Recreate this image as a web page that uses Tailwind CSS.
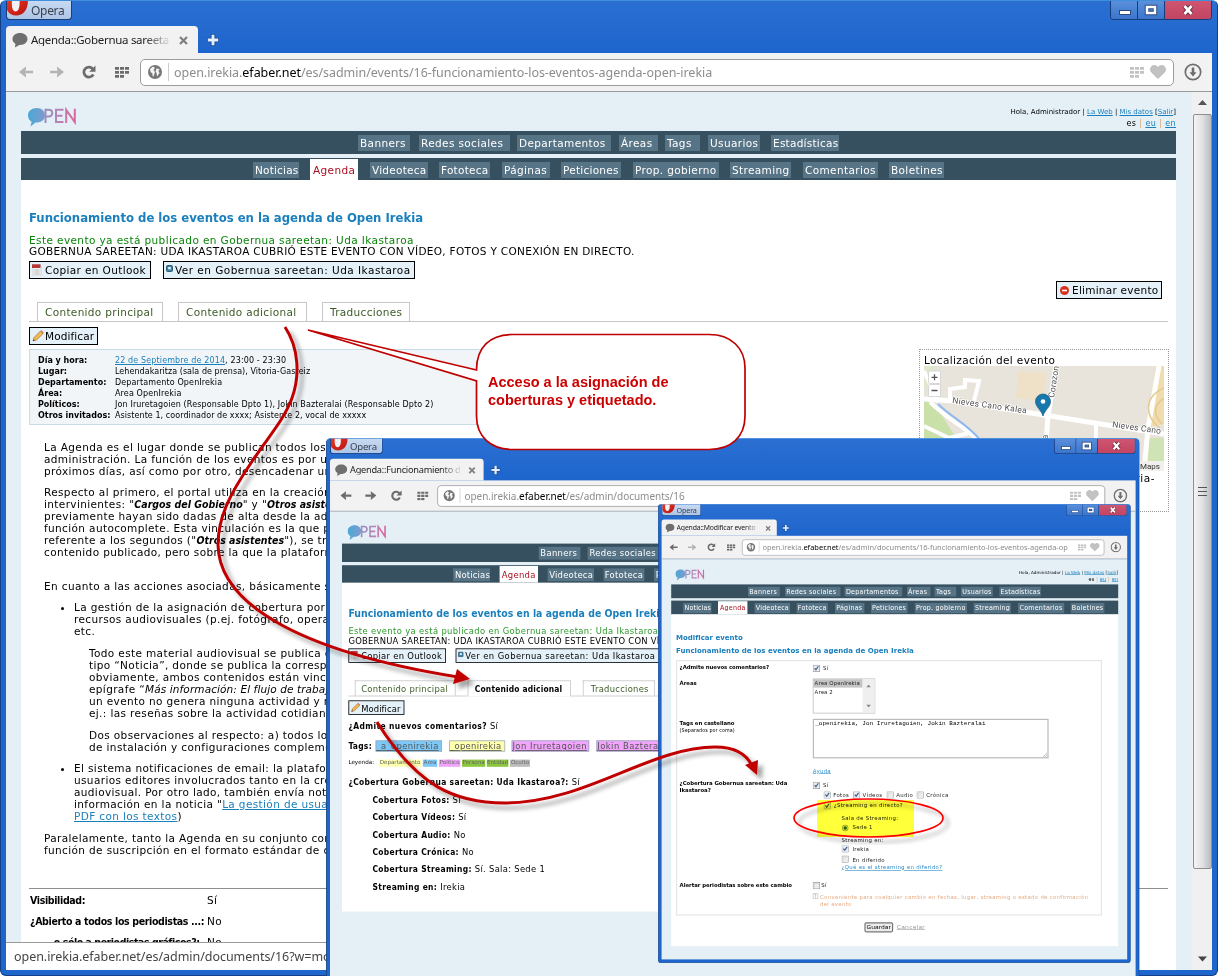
<!DOCTYPE html>
<html lang="es">
<head>
<meta charset="utf-8">
<title>Agenda::Gobernua sareetan</title>
<script src="https://cdn.jsdelivr.net/npm/@tailwindcss/browser@4"></script>
</head>
<body class="relative w-[1218px] h-[976px] overflow-hidden bg-white text-black font-['DejaVu_Sans',Verdana,sans-serif] text-[10.5px] leading-[12px] tracking-[0.37px] whitespace-nowrap">

<!-- Shared icons -->
<svg class="absolute w-0 h-0">
  <defs>
    <linearGradient id="openGrad" gradientUnits="userSpaceOnUse" x1="12" x2="50" y1="0" y2="0"><stop offset="0" stop-color="#8a93c4"/><stop offset=".5" stop-color="#b784b8"/><stop offset="1" stop-color="#e0609a"/></linearGradient>
    <linearGradient id="bubbleGrad" x1="0" x2="1" y1="0" y2="0"><stop offset="0" stop-color="#4aa8d8"/><stop offset="1" stop-color="#7f9bcb"/></linearGradient>
    <linearGradient id="operaRed" x1="0" x2="1" y1="0" y2="1"><stop offset="0" stop-color="#e8391f"/><stop offset="1" stop-color="#b81212"/></linearGradient>
  </defs>
  <symbol id="i-bubble" viewBox="0 0 16 16"><path d="M8 1C3.700 1 .5 3.600.5 7c0 2 1 3.600 2.900 4.700L3 15.500l4.300-2.600H8c4.300 0 7.500-2.500 7.500-5.900S12.300 1 8 1z" fill="#6f6f6f"/></symbol>
  <symbol id="i-back" viewBox="0 0 14 12"><path d="M7 .5v3L6 4.700H14v2.600H6l1 1.200v3L0 6z" fill="currentColor"/></symbol>
  <symbol id="i-reload" viewBox="0 0 14 14"><path d="M11.300 9.500a5 5 0 1 1-.3-5.200" fill="none" stroke="#6c6c6c" stroke-width="2.700"/><path d="M13.500.5v6.300H7.200z" fill="#6c6c6c"/></symbol>
  <symbol id="i-grid" viewBox="0 0 14 11"><g fill="currentColor"><path d="M0 0h4v2.800H0zM5 0h4v2.800H5zM10 0h4v2.800h-4zM0 4h4v2.800H0zM5 4h4v2.800H5zM10 4h4v2.800h-4zM0 8h4v2.800H0zM5 8h4v2.800H5z"/></g></symbol>
  <symbol id="i-globe" viewBox="0 0 16 16"><circle cx="8" cy="8" r="7" fill="#777"/><path d="M3 5l3-2.500L8 4 6.500 6 8 8l-1.500 4.500-1-.5V9.500L3.500 8zM9.500 4.500l3 .5-1 2 1 2-2.500 3.500-.5-3.500L8.500 7.500z" fill="#f4f4f4"/></symbol>
  <symbol id="i-heart" viewBox="0 0 16 14"><path d="M8 13.500L1.500 7.200C-.5 4.500.8.6 4.300.5 6 .5 7.300 1.300 8 2.700 8.700 1.300 10 .5 11.700.5c3.500.1 4.800 4 2.800 6.700z" fill="#c2c2c2" stroke="#b0b0b0" stroke-width=".7"/></symbol>
  <symbol id="i-down" viewBox="0 0 18 18"><circle cx="9" cy="9" r="7.700" fill="none" stroke="#6e6e6e" stroke-width="1.700"/><path d="M7.700 4.500h2.600v4.700h2.200L9 13.500 5.500 9.200h2.200z" fill="#6e6e6e"/></symbol>
  <symbol id="i-opera" viewBox="0 0 22 16"><path d="M0 0h21c0 9-4 15-11 15.500C6 15.800 2 14 0 10z" fill="url(#operaRed)"/><path d="M5 0h7.500c.5 6-.5 11.500-4 11.500S4.500 6 5 0z" fill="#f4f2f6"/></symbol>
  <symbol id="i-logo" viewBox="0 0 50 20"><path d="M9 1C3.800 1 0 4 0 8.300c0 3 1.300 5.200 3.600 6.400L2.500 19.500l5-4H9c4.500 0 8-3 8-7.200S13.500 1 9 1z" fill="url(#bubbleGrad)"/><g fill="none" stroke="url(#openGrad)" stroke-width="2"><path d="M17.500 16V2.700h3c5 0 5 6.800 0 6.800h-3M35.500 2.700H28V15h7.500M28 8.700h6.500M38.200 16V2.800L46.800 15V1.700"/></g></symbol>
  <symbol id="i-pdf" viewBox="0 0 10 12"><path d="M1 0h6l2 2v10H1z" fill="#f2f2f2" stroke="#bbb" stroke-width=".5"/><path d="M0 .3h8.500V4H0z" fill="#b43a3a"/><path d="M2.500 6h5M2.500 8h5M2.500 10h5" stroke="#b9b9b9"/></symbol>
  <symbol id="i-ext" viewBox="0 0 7 7"><rect x=".5" y=".5" width="6" height="6" rx="1" fill="#3f7d9d" stroke="#2d5f7c"/><rect x="2.200" y="2" width="2.600" height="2.300" fill="#e8f4fa"/></symbol>
  <symbol id="i-pencil" viewBox="0 0 12 12"><path d="M1 11l1-3.500L8.500 1l2.700 2.500L4.500 10z" fill="#f3b650" stroke="#8c6a33" stroke-width=".6"/><path d="M8.500 1l1-.8 2.300 2.200-.8 1z" fill="#d9706a"/><path d="M1 11l.5-1.800L2.800 10.500z" fill="#333"/></symbol>
  <symbol id="i-check" viewBox="0 0 12 12"><rect x=".5" y=".5" width="11" height="11" fill="#e9ecef" stroke="#8c8f92"/><path d="M3 5.500l2.200 2.800L9.200 2.500" fill="none" stroke="#3c5a8c" stroke-width="1.900"/></symbol>
  <symbol id="i-box" viewBox="0 0 12 12"><rect x=".5" y=".5" width="11" height="11" fill="#ececec" stroke="#8c8f92"/><path d="M2.500 9.500v-7h7" fill="none" stroke="#cdcdcd"/></symbol>
</svg>

<!-- Window 1: main page -->
<section data-window data-tab="Agenda::Gobernua sareeta" data-url="/es/sadmin/events/16-funcionamiento-los-eventos-agenda-open-irekia" data-back="off" data-forward="off" class="absolute left-0 top-0 w-[1218px] h-[976px] flex flex-col rounded-[6px] overflow-hidden bg-[#1f66cc] border border-[#123f85] border-t-[#3f8fdc] px-[5px] pb-[5px]">
  <div class="flex grow min-h-0 bg-[#e4f0f6]">
    <div class="w-[1186px] pl-[15px] pr-[16px] overflow-hidden">
      <div class="flex justify-between h-[39px] pl-[7px]">
        <svg class="w-[50px] h-[20px] mt-[15px]"><use href="#i-logo"/></svg>
        <div class="text-right text-[7px] leading-[11px] tracking-normal mt-[15px]" data-hello></div>
      </div>
      <div data-nav="1" class="flex items-center h-[23px] mb-[4px] pl-[337px] bg-[#375060] text-white"></div>
      <div data-nav="2" class="flex items-center h-[22px] pl-[232px] bg-[#375060] text-white"></div>
      <div class="h-[790px] bg-white pl-[8px] pt-[29px]">
        <h1 class="h-[18px] leading-[18px] text-[13px] font-bold text-[#1a7fbd] font-['DejaVu_Sans_Condensed'] tracking-[-0.02px]">Funcionamiento de los eventos en la agenda de Open Irekia</h1>
        <p class="mt-[7px] text-[#0a860a] tracking-[0.4px]">Este evento ya está publicado en Gobernua sareetan: Uda Ikastaroa</p>
        <p class="h-[15px] leading-[11px] tracking-[0.31px]">GOBERNUA SAREETAN: UDA IKASTAROA CUBRIÓ ESTE EVENTO CON VÍDEO, FOTOS Y CONEXIÓN EN DIRECTO.</p>
        <div class="flex gap-[12px] h-[18px]">
          <span class="flex items-center w-[122px] border border-black bg-[#e5f1f8] pl-[2px] gap-[3px]"><svg class="w-[10px] h-[12px]"><use href="#i-pdf"/></svg>Copiar en Outlook</span>
          <span class="flex items-center w-[252px] border border-black bg-[#e5f1f8] pl-[2px] gap-[2px] tracking-[0.47px]"><svg class="w-[7px] h-[7px] mb-[3px]"><use href="#i-ext"/></svg>Ver en Gobernua sareetan: Uda Ikastaroa</span>
        </div>
        <div class="flex justify-end mt-[2px] pr-[14px] h-[18px]">
          <span class="flex items-center w-[106px] border border-black bg-[#e5f1f8] pl-[3px] gap-[3px] tracking-[0.25px]"><svg class="w-[9px] h-[9px]" viewBox="0 0 9 9"><circle cx="4.500" cy="4.500" r="4.500" fill="#d8301c"/><path d="M2 3.700h5v1.600H2z" fill="#fff"/></svg>Eliminar evento</span>
        </div>
        <div class="flex mt-[3px] mr-[8px] h-[20px] pl-[8px] border-b border-[#c6c6c6] text-[#3b5a26] leading-[19px] tracking-[0.33px]">
          <span class="w-[126px] mr-[15px] pl-[7px] border border-b-0 border-[#c6c6c6]">Contenido principal</span>
          <span class="w-[129px] mr-[15px] pl-[7px] border border-b-0 border-[#c6c6c6]">Contenido adicional</span>
          <span class="w-[88px] pl-[7px] border border-b-0 border-[#c6c6c6]">Traducciones</span>
        </div>
        <span class="flex items-center mt-[5px] w-[69px] h-[18px] border border-black bg-[#e5f1f8] pl-[2px] gap-px tracking-[0.1px]"><svg class="w-[12px] h-[12px]"><use href="#i-pencil"/></svg>Modificar</span>
        <div class="flex mt-[4px]">
          <div class="w-[890px]">
            <dl class="grid grid-cols-[77px_1fr] content-start w-[700px] h-[76px] pl-[8px] pt-[5px] border border-[#c9dde9] bg-[#f1f5f8] text-[8px] leading-[11px] tracking-[0.13px]">
              <dt class="font-bold tracking-normal">Día y hora:</dt><dd><a class="text-[#1a7fbd] underline">22 de Septiembre de 2014</a>, 23:00 - 23:30</dd>
              <dt class="font-bold tracking-normal">Lugar:</dt><dd class="tracking-[0.05px]">Lehendakaritza (sala de prensa), Vitoria-Gasteiz</dd>
              <dt class="font-bold tracking-normal">Departamento:</dt><dd>Departamento OpenIrekia</dd>
              <dt class="font-bold tracking-normal">Área:</dt><dd>Area OpenIrekia</dd>
              <dt class="font-bold tracking-normal">Políticos:</dt><dd>Jon Iruretagoien (Responsable Dpto 1), Jokin Bazteralai (Responsable Dpto 2)</dd>
              <dt class="font-bold tracking-normal">Otros invitados:</dt><dd class="tracking-[0.07px]">Asistente 1, coordinador de xxxx; Asistente 2, vocal de xxxxx</dd>
            </dl>
            <article class="pl-[15px] pt-[16px]">
              <p>La Agenda es el lugar donde se publican todos los<br>administración. La función de los eventos es por un<br>próximos días, así como por otro, desencadenar un</p>
              <p class="mt-[9px]">Respecto al primero, el portal utiliza en la creación<br>intervinientes: "<b class="italic font-['DejaVu_Sans_Condensed'] tracking-normal">Cargos del Gobierno</b>" y "<b class="italic font-['DejaVu_Sans_Condensed'] tracking-normal">Otros asiste</b><br>previamente hayan sido dadas de alta desde la adm<br>función autocomplete. Esta vinculación es la que pe<br>referente a los segundos ("<b class="italic font-['DejaVu_Sans_Condensed'] tracking-normal">Otros asistentes</b>"), se tr<br>contenido publicado, pero sobre la que la plataform</p>
              <p class="mt-[22px]">En cuanto a las acciones asociadas, básicamente se</p>
              <ul class="mt-[9px] pl-[30px] list-disc">
                <li>La gestión de la asignación de cobertura por p<br>recursos audiovisuales (p.ej. fotógrafo, operad<br>etc.
                  <p class="mt-[10px] pl-[15px]">Todo este material audiovisual se publica e<br>tipo “Noticia”, donde se publica la correspon<br>obviamente, ambos contenidos están vincul<br>epígrafe “<i class="tracking-[0.1px]">Más información: El flujo de trabajo</i><br>un evento no genera ninguna actividad y no<br>ej.: las reseñas sobre la actividad cotidiana</p>
                  <p class="mt-[10px] pl-[15px]">Dos observaciones al respecto: a) todos los<br>de instalación y configuraciones complemen</p>
                </li>
                <li class="mt-[9px]">El sistema notificaciones de email: la plataform<br>usuarios editores involucrados tanto en la crea<br>audiovisual. Por otro lado, también envía notif<br>información en la noticia "<a class="text-[#1a7fbd] underline">La gestión de usuari</a><br><a class="text-[#1a7fbd] underline">PDF con los textos</a>)</li>
              </ul>
              <p class="mt-[10px]">Paralelamente, tanto la Agenda en su conjunto com<br>función de suscripción en el formato estándar de ca</p>
            </article>
          </div>
          <aside class="w-[250px] h-[163px] p-[4px] border border-dotted border-[#999]">
            <h2 class="h-[12px] leading-[12px]">Localización del evento</h2>
            <svg class="w-[240px] h-[105px]" viewBox="0 0 240 105">
              <rect width="240" height="105" fill="#e8e4dc"/>
              <path d="M94 5l28 2-3 28-27-3z" fill="#efe0c8"/>
              <path d="M240 0h-8l-10 62 18-4z" fill="#f1dcae"/>
              <path d="M222 72h18v25h-22z" fill="#cfe3b4"/>
              <path d="M0 32l12 8 20 32H0zM28 105L0 75v30z" fill="#c9e0a8"/>
              <path d="M0 25L14 0H0z" fill="#dfe8cf"/>
              <g fill="none" stroke="#fff">
                <path d="M0 33L30 35 120 49 240 68" stroke-width="5"/>
                <path d="M132 0l-8 50-4 56" stroke-width="5"/>
                <path d="M235 0l-11 62-4 43" stroke-width="5"/>
                <path d="M172 58v20M0 5L14 36M6 36c20 20 45 30 58 50M0 60l25 12 20-5M26 35V23l15-2V14l14 1-5 20M0 96l28-20" stroke-width="4"/>
              </g>
              <path d="M14 38c14 14 30 20 42 36" fill="none" stroke="#8fb8f0" stroke-width="2"/>
              <path d="M240 22c-22 10-18 30-4 40M240 32c-12 8-10 18-2 26" fill="none" stroke="#e3c98f" stroke-width="1.500"/>
              <g font-family="Roboto" font-size="8.500" letter-spacing="0" fill="#555" stroke="#fff" stroke-width="1.500" paint-order="stroke">
                <text transform="translate(28 37) rotate(8)" textLength="75">Nieves Cano Kalea</text>
                <text transform="translate(188 61) rotate(8)" textLength="49">Nieves Cano</text>
                <text transform="translate(130 32) rotate(-81)" textLength="32">Corazon</text>
                <text transform="translate(123 78) rotate(-85)">ea</text>
              </g>
              <rect x="188" y="95" width="52" height="10" fill="#f2f0ec"/>
              <text x="216" y="102.500" font-family="Roboto" font-size="8" letter-spacing="0" fill="#333" textLength="20">Maps</text>
              <g fill="#fff" stroke="#ccc" stroke-width=".7"><rect x="4.500" y="5" width="12" height="12.500" rx="1"/><rect x="4.500" y="18.500" width="12" height="12" rx="1"/></g>
              <path d="M7.500 11.300h6M10.500 8.300v6M7.500 24.500h6" stroke="#555" stroke-width="1.300"/>
              <path d="M119 50c-1.500-6-7.500-9-7.500-14.500a7.500 7.500 0 0 1 15 0C126.500 41 120.500 44 119 50z" fill="#1878ac" stroke="#0e5c8a" stroke-width=".7"/><circle cx="119" cy="35.500" r="2.300" fill="#fff"/>
            </svg>
            <p class="text-right pr-[9px] pt-px tracking-[0.5px]">Lehendakaritza, Vitoria-</p>
          </aside>
        </div>
        <dl class="grid grid-cols-[177px_1fr] gap-y-[9px] mt-[32px] mr-[8px] pt-[5px] pl-[1px] border-t border-[#8f8f8f]">
          <dt class="font-bold font-['DejaVu_Sans_Condensed'] tracking-[-0.35px]">Visibilidad:</dt><dd>Sí</dd>
          <dt class="font-bold font-['DejaVu_Sans_Condensed'] tracking-[-0.35px]">¿Abierto a todos los periodistas ...:</dt><dd>No</dd>
          <dt class="pl-[12px] font-bold font-['DejaVu_Sans_Condensed'] tracking-[-0.45px]">… o sólo a periodistas gráficos?:</dt><dd>No</dd>
        </dl>
      </div>
    </div>
    <!-- Scrollbar -->
    <div class="flex flex-col items-center w-[20px] bg-[#f0f0f0]">
      <svg class="w-[9px] h-[22px]" viewBox="0 0 9 22"><path d="M0 13l4.500-5L9 13z" fill="#555"/></svg>
      <div class="flex flex-col items-center justify-center gap-[3px] w-[19px] h-[755px] rounded-[2px] border border-[#8e8e8e] bg-linear-to-r from-[#f4f4f4] via-[#e0e1e3] to-[#b9bbbf]">
        <i class="w-[9px] h-px bg-[#555]"></i><i class="w-[9px] h-px bg-[#555]"></i><i class="w-[9px] h-px bg-[#555]"></i>
      </div>
      <svg class="w-[9px] h-[6px] mt-auto mb-[8px]" viewBox="0 0 9 5"><path d="M0 0h9L4.500 5z" fill="#444"/></svg>
    </div>
  </div>
  <!-- Link status bubble -->
  <div class="absolute left-[5px] bottom-[5px] w-[420px] h-[28px] border-t border-[#999] bg-white pl-[8px] leading-[27px] text-[12.500px] tracking-[-0.04px] text-[#444] font-['Noto_Sans']">open.irekia.efaber.net/es/admin/documents/16?w=modulo</div>
</section>

<!-- Window 2: additional content -->
<section data-window data-tab="Agenda::Funcionamiento d" data-url="/es/admin/documents/16" data-back="on" data-forward="on" class="absolute left-[326px] top-[438px] w-[1017px] h-[690px] origin-top-left scale-[0.8] flex flex-col rounded-t-[6px] overflow-hidden bg-[#1f66cc] border border-[#123f85] border-t-[#3f8fdc] px-[4px]">
  <div class="grow min-h-0 bg-[#e4f0f6] pl-[15px] pr-[31px]">
    <div class="h-[40px] pl-[7px] pt-[16px]"><svg class="w-[50px] h-[20px]"><use href="#i-logo"/></svg></div>
    <div data-nav="1" class="[zoom:1.008] flex items-center h-[23px] mb-[4px] pl-[244px] bg-[#375060] text-white"></div>
    <div data-nav="2" class="[zoom:1.008] flex items-center h-[22px] pl-[138px] bg-[#375060] text-white"></div>
    <div class="h-[411px] bg-white pl-[8px] pt-[29px]">
      <h1 class="h-[18px] leading-[19px] text-[13px] font-bold text-[#1a7fbd] font-['DejaVu_Sans_Condensed'] tracking-[0.03px]">Funcionamiento de los eventos en la agenda de Open Irekia</h1>
      <p class="mt-[7px] text-[#2c9a2c] tracking-[0.44px]">Este evento ya está publicado en Gobernua sareetan: Uda Ikastaroa</p>
      <p class="h-[16px] leading-[12px] tracking-[0.3px]">GOBERNUA SAREETAN: UDA IKASTAROA CUBRIÓ ESTE EVENTO CON VÍDEO, FOTOS</p>
      <div class="flex gap-[12px] h-[18px]">
        <span class="flex items-center w-[122px] border border-black bg-[#e5f1f8] pl-[2px] gap-[3px]"><svg class="w-[10px] h-[12px]"><use href="#i-pdf"/></svg>Copiar en Outlook</span>
        <span class="flex items-center w-[256px] border border-black bg-[#e5f1f8] pl-[2px] gap-[2px] tracking-[0.52px]"><svg class="w-[7px] h-[7px] mb-[3px]"><use href="#i-ext"/></svg>Ver en Gobernua sareetan: Uda Ikastaroa</span>
      </div>
      <div class="flex mt-[22px] h-[20px] pl-[8px] border-b border-[#c6c6c6] text-[#3b5a26] leading-[21px] tracking-[0.33px]">
        <span class="w-[126px] mr-[15px] pl-[7px] border border-b-0 border-[#c6c6c6]">Contenido principal</span>
        <span class="w-[129px] h-[20px] mr-[15px] pl-[8px] border border-b-white border-[#c6c6c6] bg-white text-black font-bold font-['DejaVu_Sans_Condensed'] tracking-[0.2px]">Contenido adicional</span>
        <span class="w-[90px] pl-[9px] border border-b-0 border-[#c6c6c6]">Traducciones</span>
      </div>
      <span class="flex items-center mt-[5px] w-[70px] h-[18px] border border-black bg-[#e5f1f8] pl-[2px] pt-px gap-px tracking-[0.1px]"><svg class="w-[12px] h-[12px] -mt-px"><use href="#i-pencil"/></svg>Modificar</span>
      <p class="mt-[8px]"><b class="font-['DejaVu_Sans_Condensed'] tracking-[0.5px]">¿Admite nuevos comentarios?</b> Sí</p>
      <div class="flex items-center mt-[11px] h-[15px] text-[#555]">
        <b class="w-[34px] text-black font-['DejaVu_Sans_Condensed']">Tags:</b>
        <a class="w-[83px] mr-[9px] border border-[#9ab] bg-[#7cc8f8] underline tracking-[0.45px]">_a_openirekia</a>
        <a class="w-[70px] mr-[8px] border border-[#9ab] bg-[#ffffb0] underline">_openirekia</a>
        <a class="w-[97px] mr-[9px] border border-[#9ab] bg-[#f0a4fb] underline tracking-[0.6px]">Jon Iruretagoien</a>
        <a class="w-[101px] border border-[#9ab] bg-[#f0a4fb] underline tracking-[0.6px]">Jokin Bazteralai</a>
      </div>
      <div class="flex items-center gap-[2px] mt-[9px] h-[10px] text-[7px] leading-[9px] tracking-normal text-[#666] text-center">
        <span class="w-[36px] text-left text-black">Leyenda:</span>
        <span class="w-[53px] bg-[#ffffb0]">Departamento</span><span class="w-[18px] bg-[#7cc8f8]">Área</span><span class="w-[27px] bg-[#f0a4fb]">Político</span><span class="w-[29px] bg-[#8cc63f]">Persona</span><span class="w-[27px] bg-[#8cc63f]">Entidad</span><span class="w-[25px] bg-[#bbb]">Oculto</span>
      </div>
      <p class="mt-[13px] mb-[6px]"><b class="font-['DejaVu_Sans_Condensed'] tracking-[0.45px]">¿Cobertura Gobernua sareetan: Uda Ikastaroa?:</b> Sí</p>
      <ul class="pl-[30px] leading-[21.700px]">
        <li><b class="font-['DejaVu_Sans_Condensed'] tracking-[0.42px]">Cobertura Fotos:</b> Sí</li>
        <li><b class="font-['DejaVu_Sans_Condensed'] tracking-[0.42px]">Cobertura Vídeos:</b> Sí</li>
        <li><b class="font-['DejaVu_Sans_Condensed'] tracking-[0.42px]">Cobertura Audio:</b> No</li>
        <li><b class="font-['DejaVu_Sans_Condensed'] tracking-[0.42px]">Cobertura Crónica:</b> No</li>
        <li><b class="font-['DejaVu_Sans_Condensed'] tracking-[0.42px]">Cobertura Streaming:</b> Sí. Sala: Sede 1</li>
        <li><b class="font-['DejaVu_Sans_Condensed'] tracking-[0.42px]">Streaming en:</b> Irekia</li>
      </ul>
    </div>
  </div>
</section>

<!-- Window 3: edit form -->
<section data-window data-tab="Agenda::Modificar evento" data-url="/es/admin/documents/16-funcionamiento-los-eventos-agenda-op" data-back="on" data-forward="off" class="absolute left-[658px] top-[504px] w-[788px] h-[765px] origin-top-left scale-[0.6] flex flex-col rounded-[6px] overflow-hidden bg-[#1f66cc] border border-[#123f85] border-t-[#3f8fdc] px-[5px] pb-[5px]">
  <div class="grow min-h-0 bg-[#e4f0f6] pl-[16px] pr-[15px]">
    <div class="flex justify-between h-[42px] pl-[7px]">
      <svg class="w-[50px] h-[20px] mt-[16px]"><use href="#i-logo"/></svg>
      <div class="text-right text-[7px] leading-[11px] tracking-normal mt-[17px]" data-hello></div>
    </div>
    <div data-nav="1" class="[zoom:1.015] flex items-center h-[23px] mb-[4px] pl-[126px] bg-[#375060] text-white"></div>
    <div data-nav="2" class="[zoom:1.015] flex items-center h-[22px] pl-[20px] bg-[#375060] text-white"></div>
    <div class="h-[553px] bg-white pl-[8px] pt-[29px]">
      <h1 class="h-[21px] leading-[18px] text-[13px] font-bold text-[#1a7fbd] font-['DejaVu_Sans_Condensed'] tracking-normal">Modificar evento</h1>
      <h2 class="h-[26px] leading-[20px] text-[13px] font-bold text-[#1a7fbd] font-['DejaVu_Sans_Condensed'] tracking-[0.02px]">Funcionamiento de los eventos en la agenda de Open Irekia</h2>
      <form class="grid grid-cols-[222px_1fr] grid-rows-[27px_67px_100px_169px_48px] w-[710px] h-[426px] pl-[4px] pt-[5px] border-2 border-[#e6e6e6] text-[9px] leading-[11px] tracking-[0.5px] text-[#222]">
        <label class="font-bold text-black tracking-[-0.12px]">¿Admite nuevos comentarios?</label>
        <div class="flex items-end h-[13px] gap-[5px]"><svg class="w-[12px] h-[12px]"><use href="#i-check"/></svg>Sí</div>
        <label class="font-bold text-black tracking-[-0.12px]">Áreas</label>
        <div class="flex w-[104px] h-[58px] -mt-[3px] border border-[#aaa]">
          <div class="w-[82px] tracking-[0.2px]"><p class="h-[14px] pl-[2px] leading-[14px] bg-[#c4c4c4]">Area OpenIrekia</p><p class="pl-[2px] leading-[14px]">Area 2</p></div>
          <div class="flex flex-col items-center justify-between grow bg-[#efefef] py-[9px]"><svg class="w-[8px] h-[5px]" viewBox="0 0 8 5"><path d="M0 5l4-5 4 5z" fill="#888"/></svg><svg class="w-[8px] h-[5px]" viewBox="0 0 8 5"><path d="M0 0h8L4 5z" fill="#888"/></svg></div>
        </div>
        <label class="font-bold text-black tracking-[-0.12px]">Tags en castellano<br><small class="font-normal text-[8px] tracking-[0.15px]">(Separados por coma)</small></label>
        <div class="-mt-[3px]">
          <div class="relative w-[393px] h-[66px] border-2 border-[#bbb] pl-[2px] pt-[1px] font-['Liberation_Mono'] text-[10px] tracking-[0.04px] text-black">_openirekia, Jon Iruretagoien, Jokin Bazteralai
            <svg class="absolute right-0 bottom-0 w-[8px] h-[8px]" viewBox="0 0 8 8"><path d="M0 8l8-8M4 8l4-4" stroke="#888"/></svg>
          </div>
          <a class="block mt-[16px] text-[#2a8cc8] underline">Ayuda</a>
        </div>
        <label class="font-bold text-black tracking-[-0.12px]">¿Cobertura Gobernua sareetan: Uda<br>Ikastaroa?</label>
        <div class="pt-px">
          <div class="flex items-end gap-[5px] h-[13px]"><svg class="w-[12px] h-[12px]"><use href="#i-check"/></svg>Sí</div>
          <div class="flex items-end gap-[4px] h-[13px] mt-[4px] pl-[18px]"><svg class="w-[12px] h-[12px] mb-px"><use href="#i-check"/></svg><span class="w-[29px]">Fotos</span><svg class="w-[12px] h-[12px] mb-px"><use href="#i-check"/></svg><span class="w-[36px]">Vídeos</span><svg class="w-[12px] h-[12px] mb-px"><use href="#i-box"/></svg><span class="w-[30px]">Audio</span><svg class="w-[12px] h-[12px] mb-px"><use href="#i-box"/></svg>Crónica</div>
          <div class="flex items-center gap-[5px] h-[12px] mt-[5px] pl-[18px]"><svg class="w-[12px] h-[12px]"><use href="#i-check"/></svg>¿Streaming en directo?</div>
          <div class="pl-[48px]">
            <p class="mt-[9px]">Sala de Streaming:</p>
            <div class="flex items-center gap-[6px] mt-[5px]"><svg class="w-[12px] h-[12px]" viewBox="0 0 12 12"><circle cx="6" cy="6" r="5" fill="#e4e8e4" stroke="#777"/><circle cx="6" cy="6" r="2.800" fill="#23602a"/></svg>Sede 1</div>
            <p class="mt-[10px]">Streaming en:</p>
            <div class="flex items-end gap-[6px] h-[12px] mt-[3px]"><svg class="w-[12px] h-[12px] mb-px"><use href="#i-check"/></svg>Irekia</div>
            <div class="flex items-end gap-[6px] h-[12px] mt-[5px]"><svg class="w-[12px] h-[12px] mb-px"><use href="#i-box"/></svg>En diferido</div>
            <a class="block mt-[2px] text-[#2a8cc8] underline">¿Qué es el streaming en diferido?</a>
          </div>
        </div>
        <label class="font-bold text-black tracking-[-0.12px]">Alertar periodistas sobre este cambio</label>
        <div>
          <div class="flex gap-[2px]"><svg class="w-[12px] h-[12px]"><use href="#i-box"/></svg>Sí</div>
          <div class="flex gap-[3px] mt-[7px] leading-[12px] text-[#e6ac84]"><span class="w-[9px] h-[9px] border border-[#bbb] text-center text-[8px] leading-[8px] text-[#999]">?</span><p>Conveniente para cualquier cambio en fechas, lugar, streaming o estado de confirmación<br>del evento</p></div>
        </div>
      </form>
      <div class="flex items-center gap-[6px] mt-[11px] pl-[314px] text-[10px]"><span class="w-[48px] h-[17px] rounded-[3px] border-2 border-[#777] bg-[#ececec] text-center leading-[13px] tracking-normal">Guardar</span><a class="text-[#999] underline">Cancelar</a></div>
    </div>
  </div>
</section>

<!-- Annotations over the windows -->
<div class="absolute left-[817px] top-[800px] w-[97px] h-[37px] bg-[#ffff3a] mix-blend-multiply"></div>
<svg class="absolute left-0 top-0 w-[1218px] h-[976px]" viewBox="0 0 1218 976">
  <defs><filter id="sh" x="-20%" y="-20%" width="140%" height="140%"><feDropShadow dx="5" dy="5" stdDeviation="2" flood-color="#000" flood-opacity=".35"/></filter></defs>
  <path d="M476.500 370C476.500 347 490 334.500 513 334.500H709C731 334.500 745 348 745 368V416C745 437 731 449.500 709 449.500H513C491 449.500 476.500 437 476.500 416V381L308 330Z" fill="#fff" stroke="#c00000" stroke-width="1.700"/>
  <g filter="url(#sh)">
    <path d="M285 327C299 348 300 376 292 398C284 420 268 437 251 463C230 494 218 517 218 545C219 600 290 650 458 677" fill="none" stroke="#c00000" stroke-width="3"/>
    <path d="M470 679L453 684L457 669z" fill="#c00000"/>
  </g>
  <g filter="url(#sh)">
    <path d="M377 722C418 787 455 803 505 803C585 803 650 747 715 747C738 747 748 757 752 766" fill="none" stroke="#c00000" stroke-width="3"/>
    <path d="M757 775L745 765L758 760z" fill="#c00000"/>
  </g>
  <ellipse cx="868.500" cy="818" rx="74.500" ry="19" fill="none" stroke="#f00" stroke-width="1.700" filter="url(#sh)"/>
</svg>
<p class="absolute left-[488px] top-[373px] text-[14.500px] leading-[18px] tracking-normal font-bold text-[#cc0000] font-['Liberation_Sans',Arial,sans-serif]">Acceso a la asignación de<br>coberturas y etiquetado.</p>

<script>
// Builds the browser chrome shared by the three windows.
const chrome = (tab, url, back, fwd) => `
<header class="shrink-0 flex flex-col h-[52px] -mx-[5px] px-[5px] bg-linear-to-b from-[#2b6fd2] to-[#1d65cc] tracking-normal">
  <div class="flex justify-between h-[25px]">
    <div class="flex items-center w-[66px] h-[20px] -mt-px rounded-b-[4px] border border-t-0 border-[#1b3d78] bg-linear-to-b from-[#c9dbf3] to-[#aec5e6] text-[12px] text-[#3a3f4c] font-['Noto_Sans'] tracking-[-0.3px] pt-[2px] overflow-hidden"><svg class="w-[22px] h-[16px] -mt-[5px] mr-[2px]"><use href="#i-opera"/></svg>Opera</div>
    <div class="flex h-[19px] rounded-b-[4px] overflow-hidden border border-t-0 border-[#173c7d] bg-[#4a83d4]">
      <span class="w-[27px] border-r border-[#173c7d] bg-linear-to-b from-[#5a8fdb] to-[#3a76cc]"><svg class="w-[27px] h-[18px]" viewBox="0 0 27 18"><rect x="8.500" y="9.500" width="11" height="4" fill="#fff" stroke="#2b4a80"/></svg></span>
      <span class="w-[27px] border-r border-[#173c7d] bg-linear-to-b from-[#5a8fdb] to-[#3a76cc]"><svg class="w-[26px] h-[18px]" viewBox="0 0 26 18"><rect x="9" y="6" width="8" height="6" fill="none" stroke="#2b4a80" stroke-width="4.500"/><rect x="9" y="6" width="8" height="6" fill="none" stroke="#fff" stroke-width="2.500"/></svg></span>
      <span class="w-[46px] bg-linear-to-b from-[#cf5570] to-[#c24462]"><svg class="w-[48px] h-[18px]" viewBox="0 0 48 18"><path d="M19.500 5l7 8M26.500 5l-7 8" stroke="#5c2035" stroke-width="4.500"/><path d="M19.500 5l7 8M26.500 5l-7 8" stroke="#fff" stroke-width="2.800"/></svg></span>
    </div>
  </div>
  <div class="flex items-center h-[27px]">
    <div class="flex items-center w-[192px] h-[27px] pl-[6px] rounded-t-[4px] bg-[#f2f2f2] text-[11.500px] text-[#222] font-['Noto_Sans']">
      <svg class="w-[16px] h-[16px] mr-[3px]"><use href="#i-bubble"/></svg>
      <span class="w-[141px] pt-px overflow-hidden tracking-[-0.3px] [mask-image:linear-gradient(to_right,#000_80%,transparent)]">${tab}</span>
      <svg class="w-[9px] h-[9px] mt-px ml-[7px]" viewBox="0 0 9 9"><path d="M1 1l7 7M8 1L1 8" stroke="#808080" stroke-width="2.300"/></svg>
    </div>
    <svg class="w-[12px] h-[12px] ml-[9px] mt-px" viewBox="0 0 12 12"><path d="M6 0v12M0 6h12" stroke="#1b4c9c" stroke-width="4.600"/><path d="M6 .8v10.400M.8 6h10.400" stroke="#e6effa" stroke-width="2.800"/></svg>
  </div>
</header>
<div class="shrink-0 flex items-center h-[39px] pl-[13px] pr-[10px] border-b border-[#9a9a9a] bg-[#f2f2f2] tracking-normal">
  <svg class="w-[14px] h-[12px] ${back === 'on' ? 'text-[#6c6c6c]' : 'text-[#b3b3b3]'}"><use href="#i-back"/></svg>
  <svg class="w-[14px] h-[12px] ml-[17px] -scale-x-100 ${fwd === 'on' ? 'text-[#6c6c6c]' : 'text-[#b3b3b3]'}"><use href="#i-back"/></svg>
  <svg class="w-[14px] h-[14px] ml-[18px]"><use href="#i-reload"/></svg>
  <svg class="w-[14px] h-[11px] ml-[19px] text-[#6c6c6c]"><use href="#i-grid"/></svg>
  <div class="flex items-center grow h-[27px] ml-[11px] pl-[6px] pr-[7px] rounded-[5px] border border-[#9c9c9c] bg-white">
    <svg class="w-[16px] h-[16px]"><use href="#i-globe"/></svg>
    <i class="w-px h-[18px] ml-[5px] mr-[5px] bg-[#ccc]"></i>
    <span class="w-0 grow pt-px overflow-hidden text-[12.500px] leading-[20px] tracking-[-0.04px] text-[#8c8c8c] font-['Noto_Sans']">open.irekia.<span class="text-black">efaber.net</span>${url}</span>
    <svg class="w-[14px] h-[11px] mx-[6px] text-[#c2c2c2]"><use href="#i-grid"/></svg>
    <svg class="w-[16px] h-[14px]"><use href="#i-heart"/></svg>
  </div>
  <svg class="w-[18px] h-[18px] ml-[10px]"><use href="#i-down"/></svg>
</div>`;
document.querySelectorAll('[data-window]').forEach(w =>
  w.insertAdjacentHTML('afterbegin', chrome(w.dataset.tab, w.dataset.url, w.dataset.back, w.dataset.forward)));

const chip = 'shrink-0 h-[16px] pl-[2px] leading-[17px] bg-[#577486]';
const navs = {
  1: [['Banners', 'w-[52px] mr-[9px]'], ['Redes sociales', 'w-[91px] mr-[7px]'], ['Departamentos', 'w-[94px] mr-[8px]'], ['Áreas', 'w-[39px] mr-[7px]'], ['Tags', 'w-[35px] mr-[8px]'], ['Usuarios', 'w-[52px] mr-[11px]'], ['Estadísticas', 'w-[68px] tracking-[0.25px]']],
  2: [['Noticias', 'w-[46px] mr-[11px] tracking-[0.2px]'], ['Agenda', ''], ['Videoteca', 'w-[58px] mr-[11px] tracking-[0.25px]'], ['Fototeca', 'w-[51px] mr-[12px] tracking-[0.25px]'], ['Páginas', 'w-[48px] mr-[11px]'], ['Peticiones', 'w-[60px] mr-[12px] tracking-[0.25px]'], ['Prop. gobierno', 'w-[86px] mr-[11px]'], ['Streaming', 'w-[61px] mr-[12px]'], ['Comentarios', 'w-[75px] mr-[11px]'], ['Boletines', 'w-[55px]']]
};
document.querySelectorAll('[data-nav]').forEach(n => {
  n.classList.add('overflow-hidden');
  n.innerHTML = navs[n.dataset.nav].map(([t, c]) => t === 'Agenda'
    ? '<a class="shrink-0 w-[48px] h-[21px] mt-px mr-[12px] pl-[3px] leading-[23px] bg-white text-[#a81020]">Agenda</a>'
    : `<a class="${chip} ${c} ${n.dataset.nav === '2' ? 'mt-[2px]' : ''}">${t}</a>`).join('');
});

document.querySelectorAll('[data-hello]').forEach(h => {
  h.innerHTML = `<p>Hola, Administrador | <a class="text-[#1a7fbd] underline">La Web</a> | <a class="text-[#1a7fbd] underline">Mis datos</a> [<a class="text-[#1a7fbd] underline">Salir</a>]</p>
  <p class="text-[8px] tracking-[0.4px]">es <span class="text-[#d2a679]">|</span> <a class="text-[#1a7fbd] underline">eu</a> <span class="text-[#d2a679]">|</span> <a class="text-[#1a7fbd] underline">en</a></p>`;
});
</script>
</body>
</html>
